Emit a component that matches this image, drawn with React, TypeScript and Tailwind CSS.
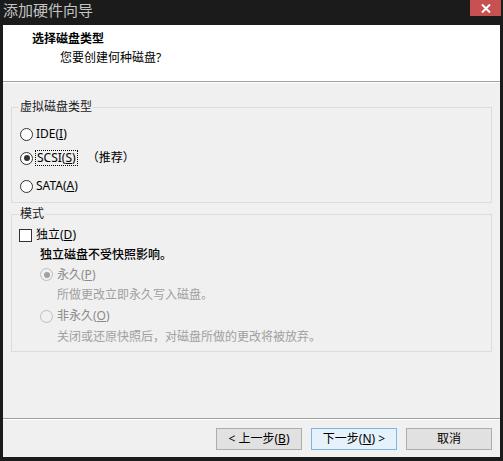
import type { ReactNode } from 'react';

const font = "font-['Noto_Sans','Noto_Sans_CJK_SC',sans-serif]";

function Radio({ checked, disabled }: { checked?: boolean; disabled?: boolean }) {
  return (
    <span
      className={`flex h-[13px] w-[13px] shrink-0 items-center justify-center rounded-full border ${
        disabled ? 'border-[#bcbcbc] bg-[#f0f0f0]' : 'border-[#333333] bg-white'
      }`}
    >
      {checked && (
        <span className={`h-[6px] w-[6px] rounded-full ${disabled ? 'bg-[#a0a0a0]' : 'bg-[#333333]'}`} />
      )}
    </span>
  );
}

function Group({ label, height, children }: { label: string; height: string; children: ReactNode }) {
  return (
    <div className={`relative ml-[8px] w-[481px] border border-[#dcdcdc] ${height}`}>
      <span className="absolute -top-[9px] left-[7px] bg-[#f0f0f0] px-[1px] text-[12px] leading-[16px] text-[#1a1a1a]">
        {label}
      </span>
      {children}
    </div>
  );
}

function Btn({ children, primary }: { children: ReactNode; primary?: boolean }) {
  return (
    <button
      className={`h-[22px] w-[86px] border text-[12px] leading-[20px] text-black ${
        primary ? 'border-[#7eb4ea] bg-[#e5f1fb]' : 'border-[#adadad] bg-[#e1e1e1]'
      }`}
    >
      {children}
    </button>
  );
}

export default function App() {
  return (
    <div className={`flex h-[461px] w-[503px] flex-col bg-[#1b1b1b] ${font}`}>
      {/* title bar */}
      <div className="flex h-[25px] items-start justify-between">
        <span className="pl-[3px] text-[15px] leading-[20px] text-[#c4c4c4]">添加硬件向导</span>
        <div className="mr-[2px] flex h-[16px] w-[31px] items-center justify-center bg-[#c75050]">
          <svg width="10" height="9" viewBox="0 0 10 9">
            <path d="M1 0.5 L9 8.5 M9 0.5 L1 8.5" stroke="white" strokeWidth="2" />
          </svg>
        </div>
      </div>

      <div className="mx-[3px] flex h-[432px] flex-col bg-[#f0f0f0]">
        {/* header */}
        <div className="h-[56px] bg-white pt-[6px]">
          <div className="pl-[29px] text-[12px] font-bold leading-[16px] text-black">选择磁盘类型</div>
          <div className="mt-[3px] pl-[57px] text-[12px] leading-[16px] text-black">您要创建何种磁盘?</div>
        </div>
        <div className="h-px bg-[#a0a0a0]" />
        <div className="h-px bg-white" />

        {/* body */}
        <div className="flex h-[335px] flex-col pt-[24px] text-[12px] leading-[16px] text-black">
          <Group label="虚拟磁盘类型" height="h-[96px]">
            <div className="flex flex-col pl-[8px] pt-[14px]">
              <div className="flex h-[24px] items-center gap-[2px]">
                <Radio />
                <span className="px-[1px]">
                  IDE(<span className="underline">I</span>)
                </span>
              </div>
              <div className="flex h-[24px] items-center gap-[2px]">
                <Radio checked />
                <span className="border border-dotted border-black px-[1px] leading-[14px]">
                  SCSI(<span className="underline">S</span>)
                </span>
                <span className="ml-[7px]">（推荐）</span>
              </div>
              <div className="mt-[4px] flex h-[24px] items-center gap-[2px]">
                <Radio />
                <span className="px-[1px]">
                  SATA(<span className="underline">A</span>)
                </span>
              </div>
            </div>
          </Group>

          <div className="mt-[11px]">
            <Group label="模式" height="h-[138px]">
              <div className="flex flex-col pt-[10px]">
                <div className="flex h-[20px] items-center gap-[4px] pl-[7px]">
                  <span className="h-[13px] w-[13px] border border-[#333333] bg-white" />
                  <span>
                    独立(<span className="underline">D</span>)
                  </span>
                </div>
                <div className="flex h-[19px] items-center pl-[28px] font-medium">独立磁盘不受快照影响。</div>
                <div className="flex h-[21px] items-center gap-[4px] pl-[28px] text-[#8a8a8a]">
                  <Radio checked disabled />
                  <span>
                    永久(<span className="underline">P</span>)
                  </span>
                </div>
                <div className="flex h-[20px] items-center pl-[45px] text-[#a0a0a0]">所做更改立即永久写入磁盘。</div>
                <div className="flex h-[22px] items-center gap-[4px] pl-[28px] text-[#8a8a8a]">
                  <Radio disabled />
                  <span>
                    非永久(<span className="underline">O</span>)
                  </span>
                </div>
                <div className="flex h-[19px] items-center pl-[45px] text-[#a0a0a0]">
                  关闭或还原快照后，对磁盘所做的更改将被放弃。
                </div>
              </div>
            </Group>
          </div>
        </div>

        <div className="h-px bg-[#a0a0a0]" />
        <div className="h-px bg-white" />

        {/* footer */}
        <div className="flex justify-end gap-[9px] pr-[8px] pt-[8px]">
          <Btn>
            &lt; 上一步(<span className="underline">B</span>)
          </Btn>
          <Btn primary>
            下一步(<span className="underline">N</span>) &gt;
          </Btn>
          <Btn>取消</Btn>
        </div>
      </div>
    </div>
  );
}
